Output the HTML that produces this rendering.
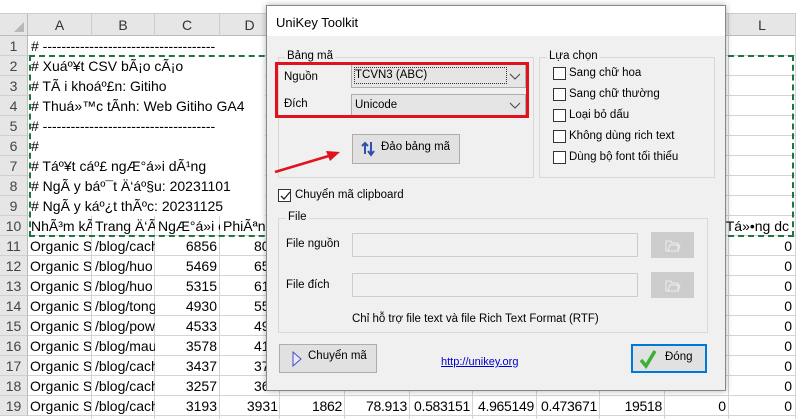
<!DOCTYPE html><html><head><style>
*{box-sizing:border-box;margin:0;padding:0}
body{width:796px;height:419px;overflow:hidden;background:#fff;font-family:"Liberation Sans",sans-serif;position:relative}
.a{position:absolute}
.cell{position:absolute;font-size:14px;color:#000;white-space:nowrap;overflow:hidden;line-height:20px}
.rn{position:absolute;left:0;width:28px;text-align:center;font-size:14px;color:#444;background:#e6e6e6;border-right:1px solid #bbb;border-bottom:1px solid #d0d0d0;height:20px;line-height:20px}
.dl{font-family:"Liberation Sans",sans-serif;font-size:11.5px;color:#000;position:absolute;white-space:nowrap}
.cb{position:absolute;width:13px;height:13px;border:1px solid #333;background:#fff}
.grp{position:absolute;border:1px solid #d8d8d8}
.btn{position:absolute;background:#e1e1e1;border:1px solid #adadad}
</style></head><body>
<div class="a" style="left:0;top:0;width:796px;height:14px;background:#fff;border-bottom:1px solid #ccc"></div>
<div class="a" style="left:0;top:14px;width:796px;height:22px;background:#e6e6e6;border-bottom:1px solid #bbb"></div>
<div class="a" style="left:0;top:14px;width:28px;height:22px;border-right:1px solid #bbb"></div>
<div class="a" style="left:14px;top:22px;width:0;height:0;border-left:10px solid transparent;border-bottom:10px solid #b8b8b8"></div>
<div id="g"></div>
<script>
var cols=[28,92,155,220,280,345,410,473,537,600,665,729,796];
var names="ABCDEFGHIJKL";
var h='';
for(var i=0;i<12;i++){h+='<div class="a" style="left:'+cols[i]+'px;top:14px;width:'+(cols[i+1]-cols[i])+'px;height:22px;text-align:center;line-height:22px;font-size:14px;color:#333;border-right:1px solid #ccc">'+names[i]+'</div>';
h+='<div class="a" style="left:'+(cols[i+1]-1)+'px;top:36px;width:1px;height:383px;background:#d4d4d4"></div>';}
for(var r=1;r<=19;r++){var t=36+20*(r-1);h+='<div class="a" style="left:28px;top:'+(t+19)+'px;width:768px;height:1px;background:#d4d4d4"></div><div class="rn" style="top:'+t+'px">'+r+'</div>';}
var txt=["# -------------------------------------","# Xuáº¥t CSV bÃ¡o cÃ¡o","# TÃ i khoáº£n: Gitiho","# Thuá»™c tÃ­nh: Web Gitiho GA4","# -------------------------------------","#","# Táº¥t cáº£ ngÆ°á»i dÃ¹ng","# NgÃ y báº¯t Ä‘áº§u: 20231101","# NgÃ y káº¿t thÃºc: 20231125"];
for(var r=0;r<9;r++){var t=36+20*r;h+='<div class="cell" style="left:29px;top:'+t+'px;width:236px;background:#fff;padding-left:2px">'+txt[r].replace(/</g,'&lt;')+'</div>';}
var t10=216;
var hd=["NhÃ³m kÃ","Trang Ä‘Ã·","NgÆ°á»i c","PhiÃªn"];
for(var i=0;i<4;i++)h+='<div class="cell" style="left:'+(cols[i]+1)+'px;top:'+t10+'px;width:'+(cols[i+1]-cols[i]-1)+'px;padding-left:2px">'+hd[i]+'</div>';
h+='<div class="cell" style="left:712px;top:216px;width:84px">cl Tá»•ng dc</div>';
var b=["/blog/cach","/blog/huo","/blog/huo","/blog/tong","/blog/pow","/blog/mau","/blog/cach","/blog/cach","/blog/cach"];
var c=[6856,5469,5315,4930,4533,3578,3437,3257,3193];
var d=[80,65,61,55,49,41,37,36,3931];
for(var r=0;r<9;r++){var t=236+20*r;
h+='<div class="cell" style="left:30px;top:'+t+'px;width:61px">Organic Se</div>';
h+='<div class="cell" style="left:93px;top:'+t+'px;width:62px;padding-left:2px">'+b[r]+'</div>';
h+='<div class="cell" style="left:155px;top:'+t+'px;width:62px;text-align:right">'+c[r]+'</div>';
h+='<div class="cell" style="left:220px;top:'+t+'px;width:58px;text-align:'+(r==8?'right':'left')+';padding-left:'+(r==8?0:34)+'px">'+d[r]+'</div>';
h+='<div class="cell" style="left:729px;top:'+t+'px;width:63px;text-align:right">0</div>';
h+='<div class="cell" style="left:665px;top:'+t+'px;width:61px;text-align:right">0</div>';}
var last=["1862","78.913","0.583151","4.965149","0.473671","19518"];
for(var i=0;i<6;i++)h+='<div class="cell" style="left:'+cols[i+4]+'px;top:396px;width:'+(cols[i+5]-cols[i+4]-3)+'px;text-align:right;letter-spacing:-0.3px">'+last[i]+'</div>';
document.getElementById('g').innerHTML=h;
</script>
<div class="a" style="left:29px;top:55px;width:765px;height:2px;border-top:2px dashed #217346"></div>
<div class="a" style="left:29px;top:235px;width:765px;height:2px;border-top:2px dashed #217346"></div>
<div class="a" style="left:29px;top:55px;width:2px;height:182px;border-left:2px dashed #217346"></div>
<div class="a" style="left:792px;top:55px;width:2px;height:182px;border-left:2px dashed #217346"></div>

<div class="a" style="left:266px;top:5px;width:460px;height:386px;background:#f0f0f0;border:1px solid #888;box-shadow:0 0 6px rgba(0,0,0,.3)">
<div class="a" style="left:0;top:0;width:458px;height:30px;background:#fff"></div>
<div class="dl" style="left:9px;top:9px;font-size:13px">UniKey Toolkit</div>
<div class="grp" style="left:11px;top:51px;width:256px;height:121px"></div>
<div class="dl" style="left:18px;top:44px;background:#f0f0f0;padding:0 2px">Bảng mã</div>
<div class="grp" style="left:272px;top:51px;width:176px;height:121px"></div>
<div class="dl" style="left:280px;top:44px;background:#f0f0f0;padding:0 2px">Lựa chọn</div>
<div class="a" style="left:84px;top:58px;width:175px;height:24px;background:#e5e5e5;border:1px solid #adadad"></div>
<div class="a" style="left:87px;top:61px;width:153px;height:17px;border:1px dotted #333"></div>
<div class="dl" style="left:88px;top:63px">TCVN3 (ABC)</div>
<div class="a" style="left:84px;top:88px;width:175px;height:24px;background:#e5e5e5;border:1px solid #adadad"></div>
<div class="dl" style="left:88px;top:93px">Unicode</div>
<svg class="a" style="left:242px;top:66px" width="12" height="40"><path d="M1 2l5 5 5-5M1 31l5 5 5-5" fill="none" stroke="#444"/></svg>
<div class="dl" style="left:17px;top:65px">Nguồn</div>
<div class="dl" style="left:17px;top:92px">Đích</div>
<div class="a" style="left:8px;top:56px;width:254px;height:56px;border:3px solid #e0121d"></div>
<div class="btn" style="left:85px;top:128px;width:108px;height:30px"></div>
<svg class="a" style="left:93px;top:134px" width="18" height="20"><path d="M5 14V3M2 6l3-3 3 3M11 2v12M8 11l3 4 3-4" fill="none" stroke="#3050b0" stroke-width="2"/></svg>
<div class="dl" style="left:114px;top:135px">Đảo bảng mã</div>
<div class="cb" style="left:286px;top:61px"></div><div class="dl" style="left:302px;top:61px">Sang chữ hoa</div>
<div class="cb" style="left:286px;top:82px"></div><div class="dl" style="left:302px;top:82px">Sang chữ thường</div>
<div class="cb" style="left:286px;top:103px"></div><div class="dl" style="left:302px;top:103px">Loại bỏ dấu</div>
<div class="cb" style="left:286px;top:124px"></div><div class="dl" style="left:302px;top:124px">Không dùng rich text</div>
<div class="cb" style="left:286px;top:145px"></div><div class="dl" style="left:302px;top:145px">Dùng bộ font tối thiểu</div>
<div class="cb" style="left:11px;top:183px"></div>
<svg class="a" style="left:12px;top:184px" width="12" height="12"><path d="M2 6l3 3 6-7" fill="none" stroke="#222" stroke-width="1.3"/></svg>
<div class="dl" style="left:28px;top:183px">Chuyển mã clipboard</div>
<div class="grp" style="left:11px;top:212px;width:430px;height:115px"></div>
<div class="dl" style="left:19px;top:205px;background:#f0f0f0;padding:0 2px">File</div>
<div class="dl" style="left:19px;top:232px">File nguồn</div>
<div class="a" style="left:85px;top:227px;width:286px;height:24px;background:#f0f0f0;border:1px solid #ccc"></div>
<div class="a" style="left:384px;top:226px;width:43px;height:26px;background:#ccc"></div>
<div class="dl" style="left:19px;top:273px">File đích</div>
<div class="a" style="left:85px;top:267px;width:286px;height:24px;background:#f0f0f0;border:1px solid #ccc"></div>
<div class="a" style="left:384px;top:266px;width:43px;height:26px;background:#ccc"></div>
<svg class="a" style="left:398px;top:231px" width="16" height="16"><path d="M1 4h5l1 2h6v8H1z M3 14l2-6h10l-2 6" fill="none" stroke="#eee"/></svg>
<svg class="a" style="left:398px;top:271px" width="16" height="16"><path d="M1 4h5l1 2h6v8H1z M3 14l2-6h10l-2 6" fill="none" stroke="#eee"/></svg>
<div class="dl" style="left:85px;top:307px">Chỉ hỗ trợ file text và file Rich Text Format (RTF)</div>
<div class="btn" style="left:12px;top:338px;width:98px;height:29px"></div>
<svg class="a" style="left:24px;top:345px" width="12" height="16"><path d="M2 1l8 7-8 7z" fill="#e8e8ff" stroke="#4050c0"/></svg>
<div class="dl" style="left:41px;top:344px">Chuyển mã</div>
<div class="dl" style="left:174px;top:350px;color:#0000cc;text-decoration:underline;font-size:11px">http://unikey.org</div>
<div class="btn" style="left:364px;top:338px;width:76px;height:29px;border:2px solid #0078d7"></div>
<svg class="a" style="left:372px;top:343px" width="18" height="20"><path d="M2 11l5 6L16 2" fill="none" stroke="#3cb034" stroke-width="3.5"/></svg>
<div class="dl" style="left:398px;top:345px">Đóng</div>
</div>
<svg class="a" style="left:270px;top:145px" width="80" height="35"><path d="M5 27L62 10" stroke="#e0121d" stroke-width="2.5"/><path d="M70 7L56 6l4 10z" fill="#e0121d"/></svg>
</body></html>
